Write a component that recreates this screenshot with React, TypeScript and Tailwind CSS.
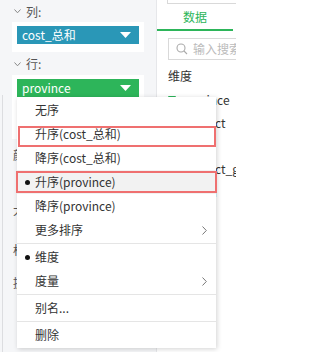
import React from 'react';

const font = { fontFamily: '"Noto Sans CJK SC", "Noto Sans", sans-serif' };

const Chevron = () => (
  <svg width="7" height="5" viewBox="0 0 7 5" className="mr-[5px]">
    <polyline points="0.5,0.5 3.5,3.8 6.5,0.5" fill="none" stroke="#888" strokeWidth="1" />
  </svg>
);

const Caret = () => (
  <svg width="11" height="6" viewBox="0 0 11 6">
    <polygon points="0,0 11,0 5.5,6" fill="#fff" />
  </svg>
);

const Arrow = () => (
  <svg width="5" height="9" viewBox="0 0 5 9">
    <polyline points="0.5,0.5 4.3,4.5 0.5,8.5" fill="none" stroke="#777" strokeWidth="1" />
  </svg>
);

interface ItemProps {
  label: string;
  dot?: boolean;
  sub?: boolean;
  active?: boolean;
}

const MenuItem = ({ label, dot, sub, active }: ItemProps) => (
  <div
    className={`relative flex items-center h-[24px] pl-[18px] pr-[9px] text-[12px] text-[#333] ${
      active ? 'bg-[#f2f2f2]' : ''
    }`}
  >
    {dot && <span className="absolute left-[8px] top-[10px] w-[5px] h-[5px] rounded-full bg-[#111]" />}
    <span className="flex-1">{label}</span>
    {sub && <Arrow />}
  </div>
);

const Divider = () => <div className="h-px my-px bg-[#e5e5e5]" />;

const SortMenu = () => (
  <div className="absolute left-[17px] top-[97px] w-[199px] bg-white py-px shadow-[1px_1px_5px_rgba(0,0,0,0.18)]">
    <MenuItem label="无序" />
    <MenuItem label="升序(cost_总和)" />
    <MenuItem label="降序(cost_总和)" />
    <MenuItem label="升序(province)" dot active />
    <MenuItem label="降序(province)" />
    <MenuItem label="更多排序" sub />
    <Divider />
    <MenuItem label="维度" dot />
    <MenuItem label="度量" sub />
    <Divider />
    <MenuItem label="别名..." />
    <Divider />
    <MenuItem label="删除" />
    {/* annotation boxes */}
    <div className="absolute left-[1px] top-[29px] w-[198px] h-[21px] border-2 border-[#ef7070]" />
    <div className="absolute left-[-1px] top-[74px] w-[201px] h-[22px] border-2 border-[#ef7070]" />
  </div>
);

const fields = ['province', 'product', 'city', 'product_group', 'region'];

export default function App() {
  return (
    <div className="relative flex w-[236px] h-[352px] overflow-hidden bg-white" style={font}>
      {/* left panel */}
      <div className="relative w-[157px] h-full bg-[#f5f6f8] border-r border-[#e6e7ea]">
        <div className="absolute left-[2px] top-[95px] bottom-0 w-px bg-[#dcdde0]" />
        <div className="flex items-center h-[22px] pl-[14px] pt-[1px] text-[12px] text-[#555]">
          <Chevron />
          <span>列:</span>
        </div>
        <div className="mx-[12px] bg-white px-[5px] py-[4px] h-[30px]">
          <div className="flex items-center justify-between h-[18px] bg-[#2a97b7] pl-[5px] pr-[8px] text-[12px] text-white">
            <span>cost_总和</span>
            <Caret />
          </div>
        </div>
        <div className="flex items-center h-[23px] pl-[14px] pt-[1px] text-[12px] text-[#555]">
          <Chevron />
          <span>行:</span>
        </div>
        <div className="mx-[12px] bg-white px-[5px] py-[4px] h-[64px]">
          <div className="flex items-center justify-between h-[18px] bg-[#2db55a] pl-[5px] pr-[8px] text-[12px] text-white">
            <span>province</span>
            <Caret />
          </div>
        </div>
        <div className="flex flex-col pl-[13px] text-[12px] text-[#555]">
          <div className="h-[16px] mt-[8px] leading-[16px]">颜色</div>
          <div className="h-[16px] mt-[39px] leading-[16px]">大小</div>
          <div className="h-[16px] mt-[24px] leading-[16px]">标签</div>
          <div className="h-[16px] mt-[17px] leading-[16px]">提示</div>
        </div>
      </div>

      {/* right panel */}
      <div className="flex-1 flex flex-col bg-white min-w-0">
        <div className="ml-[10px] mt-[-20px] w-[80px] h-[24px] border border-[#d9d9d9] bg-white shrink-0" />
        <div className="flex items-center justify-center h-[27px] mr-[3px] text-[12px] text-[#2db55a] border-b-2 border-[#2db55a] shrink-0">
          数据
        </div>
        <div className="flex items-center ml-[11px] mt-[7px] w-[80px] h-[22px] border border-[#d9d9d9] pl-[7px] shrink-0">
          <svg width="12" height="12" viewBox="0 0 12 12" className="shrink-0">
            <circle cx="5" cy="5" r="4" fill="none" stroke="#aaa" strokeWidth="1.1" />
            <line x1="8" y1="8" x2="11" y2="11" stroke="#aaa" strokeWidth="1.1" />
          </svg>
          <span className="ml-[5px] text-[12px] text-[#bbb] whitespace-nowrap">输入搜索</span>
        </div>
        <div className="ml-[11px] mt-[7px] text-[12px] text-[#333] leading-[18px]">维度</div>
        <div className="flex flex-col ml-[11px] mt-[3px]">
          {fields.map((f) => (
            <div key={f} className="flex items-center h-[23px] whitespace-nowrap text-[12px] text-[#333]">
              <span className="w-[8px] h-[8px] mr-[5px] rounded-[1px] bg-[#2db55a] shrink-0" />
              <span>{f}</span>
            </div>
          ))}
        </div>
      </div>

      <SortMenu />
    </div>
  );
}
